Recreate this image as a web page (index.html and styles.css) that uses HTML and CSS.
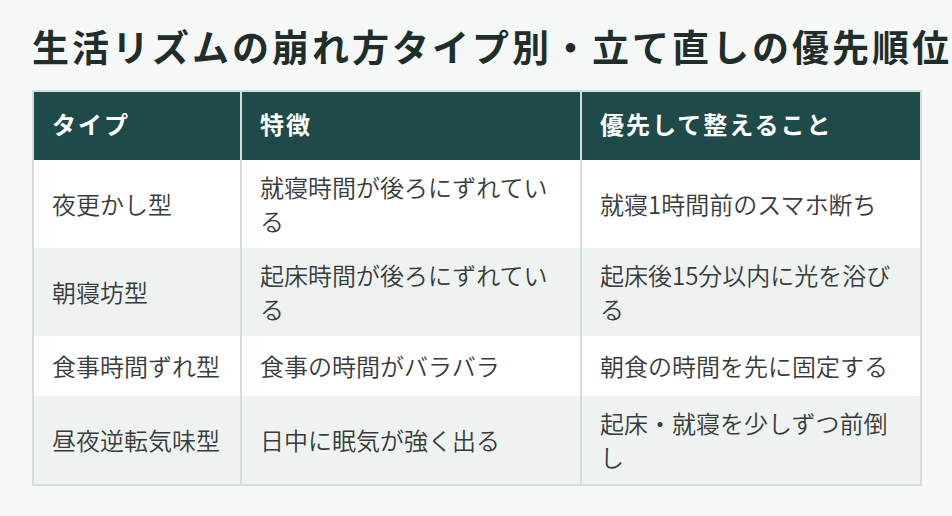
FILE: index.html
```html
<!DOCTYPE html>
<html lang="ja">
<head>
<meta charset="utf-8">
<title>生活リズムの崩れ方タイプ別・立て直しの優先順位</title>
<link rel="stylesheet" href="styles.css">
</head>
<body>
<main class="page">
  <h1 class="title">生活リズムの崩れ方タイプ別・立て直しの優先順位</h1>
  <table class="rhythm-table">
    <colgroup>
      <col class="col-type">
      <col class="col-feature">
      <col class="col-priority">
    </colgroup>
    <thead>
      <tr>
        <th>タイプ</th>
        <th>特徴</th>
        <th>優先して整えること</th>
      </tr>
    </thead>
    <tbody>
      <tr>
        <td>夜更かし型</td>
        <td>就寝時間が後ろにずれている</td>
        <td>就寝1時間前のスマホ断ち</td>
      </tr>
      <tr>
        <td>朝寝坊型</td>
        <td>起床時間が後ろにずれている</td>
        <td>起床後15分以内に光を浴びる</td>
      </tr>
      <tr>
        <td>食事時間ずれ型</td>
        <td>食事の時間がバラバラ</td>
        <td>朝食の時間を先に固定する</td>
      </tr>
      <tr>
        <td>昼夜逆転気味型</td>
        <td>日中に眠気が強く出る</td>
        <td>起床・就寝を少しずつ前倒し</td>
      </tr>
    </tbody>
  </table>
</main>
</body>
</html>
```

FILE: styles.css
```css
html, body {
  margin: 0;
  padding: 0;
  background: #f6f8f7;
}

body {
  font-family: "Noto Sans CJK JP", "Noto Sans", sans-serif;
  color: #3a3d3c;
}

.page {
  padding: 20px 30px 0 32px;
}

.title {
  margin: 0 0 18px;
  font-size: 37px;
  line-height: 52px;
  font-weight: 700;
  letter-spacing: 3px;
  color: #1f2e2b;
  white-space: nowrap;
}

.rhythm-table {
  border-collapse: separate;
  border-spacing: 0;
  border: 2px solid #d3dedb;
  table-layout: fixed;
  width: 890px;
  background: #ffffff;
}

.col-type { width: 208px; }
.col-feature { width: 340px; }
.col-priority { width: 338px; }

.rhythm-table th,
.rhythm-table td {
  border-right: 2px solid #d3dedb;
  text-align: left;
  vertical-align: middle;
  font-size: 24px;
  line-height: 34px;
}

.rhythm-table th:last-child,
.rhythm-table td:last-child {
  border-right: none;
}

.rhythm-table th {
  background: #1f4a4a;
  color: #ffffff;
  font-weight: 700;
  letter-spacing: 2px;
  padding: 15px 18px 19px;
}

.rhythm-table td {
  padding: 10px 18px;
  height: 60px;
  box-sizing: border-box;
  font-weight: 350;
  color: #383b3a;
}

.rhythm-table tbody tr:nth-child(even) td {
  background: #eef3f1;
}
```
